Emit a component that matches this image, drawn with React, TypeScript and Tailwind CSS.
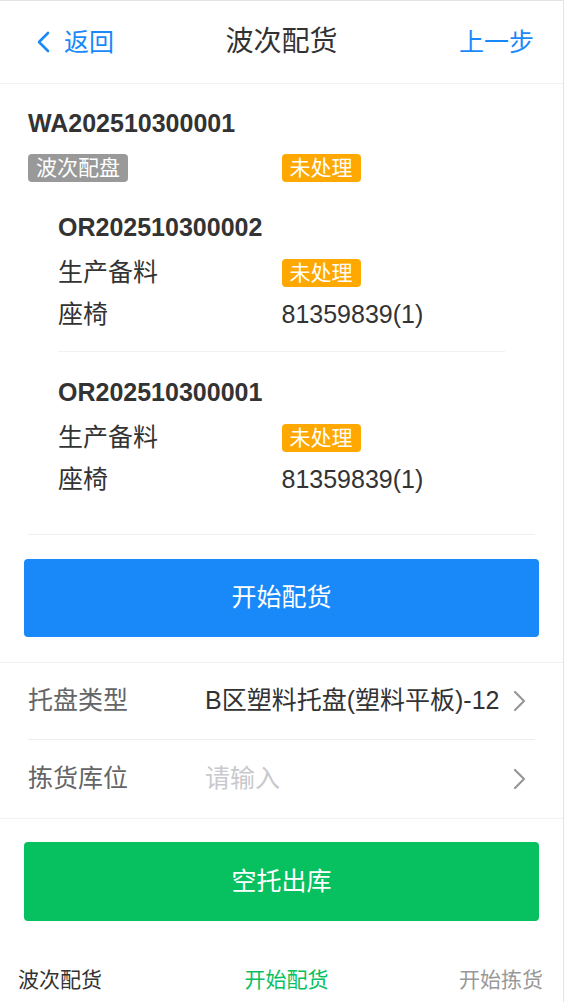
const font = "font-['Liberation_Sans','Noto_Sans_CJK_SC',sans-serif]"

interface OrderItem {
  code: string
  kind: string
  status: string
  part: string
  qty: string
}

const orders: OrderItem[] = [
  { code: 'OR202510300002', kind: '生产备料', status: '未处理', part: '座椅', qty: '81359839(1)' },
  { code: 'OR202510300001', kind: '生产备料', status: '未处理', part: '座椅', qty: '81359839(1)' },
]

function Tag({ text, color }: { text: string; color: string }) {
  return (
    <span
      className={`inline-flex h-[28px] items-center rounded-[4px] px-[8px] text-[21px] leading-[28px] text-white ${color}`}
    >
      {text}
    </span>
  )
}

function ChevronRight() {
  return (
    <svg width="13" height="22" viewBox="0 0 13 22" fill="none" className="shrink-0">
      <path d="M2 2 L11 11 L2 20" stroke="#969799" strokeWidth="2.2" strokeLinecap="round" strokeLinejoin="round" />
    </svg>
  )
}

function Field({ label, value, placeholder, last }: { label: string; value?: string; placeholder?: string; last?: boolean }) {
  return (
    <div className={`flex items-center px-[28px] ${last ? 'h-[78px]' : 'h-[77px]'}`}>
      <div className={`flex h-full w-full items-center ${last ? '' : 'border-b border-[#ebedf0]'}`}>
        <span className="w-[177px] shrink-0 text-[25px] text-[#646566]">{label}</span>
        <span
          className={`flex-1 overflow-hidden whitespace-nowrap text-[25px] ${value ? 'text-[#323233]' : 'text-[#c8c9cc]'}`}
        >
          {value ?? placeholder}
        </span>
        <span className="ml-[13px] mr-[9px]">
          <ChevronRight />
        </span>
      </div>
    </div>
  )
}

export default function App() {
  return (
    <div className={`min-h-[1002px] w-[564px] border-t border-r border-[#e3e3e3] bg-white ${font}`}>
      <header className="grid h-[83px] grid-cols-3 items-center border-b border-[#f2f2f2] px-[29px]">
        <div className="flex items-center pl-[7px] text-[#1989fa]">
          <svg width="14" height="22" viewBox="0 0 14 22" fill="none">
            <path d="M12 2 L3 11 L12 20" stroke="#1989fa" strokeWidth="2.6" strokeLinecap="round" strokeLinejoin="round" />
          </svg>
          <span className="ml-[14px] text-[25px] leading-[34px]">返回</span>
        </div>
        <h1 className="text-center text-[28px] leading-[40px] text-[#323233]">波次配货</h1>
        <div className="text-right text-[25px] leading-[34px] text-[#1989fa]">上一步</div>
      </header>

      <section className="mx-[28px] border-b border-[#f0f0f0] pb-[18px] pt-[22px]">
        <div className="text-[25px] font-bold leading-[34px] text-[#333]">WA202510300001</div>
        <div className="mt-[14px] grid grid-cols-2">
          <div>
            <Tag text="波次配盘" color="bg-[#999999]" />
          </div>
          <div>
            <Tag text="未处理" color="bg-[#ffa800]" />
          </div>
        </div>
        <div className="mt-[5px]">
          {orders.map((o, i) => (
            <div
              key={o.code}
              className={`mx-[30px] pb-[21px] pt-[23px] ${i < orders.length - 1 ? 'border-b border-[#f0f0f0]' : ''}`}
            >
              <div className="text-[25px] font-bold leading-[34px] text-[#333]">{o.code}</div>
              <div className="mt-[10px] grid h-[34px] grid-cols-2 items-center">
                <span className="text-[25px] text-[#333]">{o.kind}</span>
                <div>
                  <Tag text={o.status} color="bg-[#ffa800]" />
                </div>
              </div>
              <div className="mt-[8px] grid h-[34px] grid-cols-2 items-center">
                <span className="text-[25px] text-[#333]">{o.part}</span>
                <span className="text-[25px] text-[#333]">{o.qty}</span>
              </div>
            </div>
          ))}
        </div>
      </section>

      <div className="border-b border-[#f2f2f2] px-[24px] pb-[25px] pt-[24px]">
        <button className="flex h-[78px] w-full items-center justify-center rounded-[4px] bg-[#1989fa] text-[25px] text-white">
          开始配货
        </button>
      </div>

      <div className="border-b border-[#f2f2f2]">
        <Field label="托盘类型" value="B区塑料托盘(塑料平板)-12" />
        <Field label="拣货库位" placeholder="请输入" last />
      </div>

      <div className="px-[24px] pt-[23px]">
        <button className="flex h-[79px] w-full items-center justify-center rounded-[4px] bg-[#07c160] text-[25px] text-white">
          空托出库
        </button>
      </div>

      <nav className="mt-[44px] flex items-center justify-between pl-[18px] pr-[20px] text-[21px] leading-[30px]">
        <span className="text-[#333]">波次配货</span>
        <span className="ml-[12px] text-[#07c160]">开始配货</span>
        <span className="text-[#999]">开始拣货</span>
      </nav>
    </div>
  )
}
